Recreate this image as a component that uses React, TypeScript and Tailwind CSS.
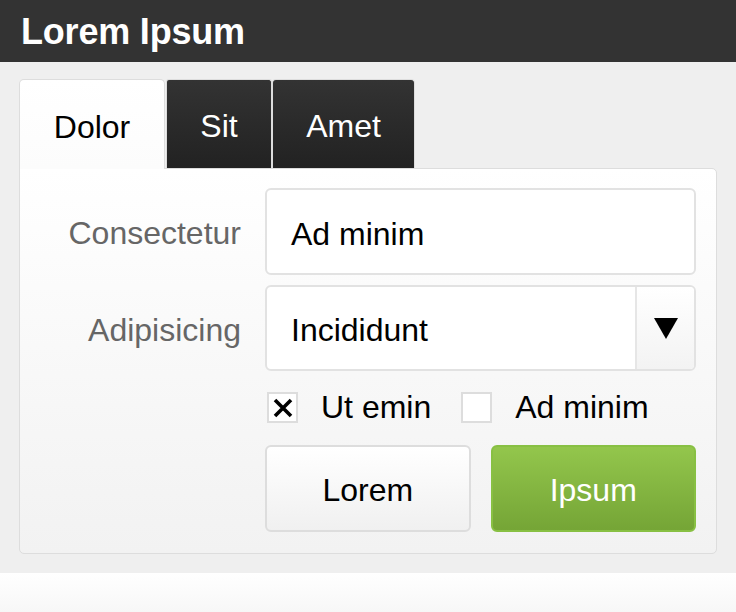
import React from "react";

const font = { fontFamily: '"Liberation Sans", Arial, Helvetica, sans-serif' };

export default function App() {
  return (
    <div className="w-[736px] h-[612px] flex flex-col bg-white" style={font}>
      <div className="h-[62px] bg-[#333333] flex items-center pl-[21px]">
        <span className="text-white font-bold text-[36px] leading-none tracking-[-0.2px] pt-[1px]">Lorem Ipsum</span>
      </div>
      <div className="bg-[#efefef] pt-[17px] pb-[19px] px-[19px] flex flex-col">
        <div className="flex items-end h-[89px]">
          <div className="h-[90px] w-[146px] -mb-px relative z-10 border border-b-0 border-[#dddddd] rounded-t-[5px] bg-gradient-to-b from-white to-[#fcfcfc] flex items-center justify-center text-[32px] text-black pt-[4px]">
            Dolor
          </div>
          <div className="h-[89px] w-[106px] ml-px border border-b-0 border-[#dddddd] rounded-t-[3px] bg-gradient-to-b from-[#333333] to-[#222222] flex items-center justify-center text-[32px] text-white pt-[4px]">
            Sit
          </div>
          <div className="h-[89px] w-[143px] border border-b-0 border-[#dddddd] rounded-t-[4px] bg-gradient-to-b from-[#333333] to-[#222222] flex items-center justify-center text-[32px] text-white pt-[4px]">
            Amet
          </div>
        </div>
        <div className="border-[1.5px] border-[#dddddd] rounded-b-[5px] rounded-tr-[5px] bg-gradient-to-b from-white to-[#f2f2f2] pt-[19px] pb-[21px] pl-[20px] pr-[20px] flex flex-col">
          <div className="flex items-center">
            <div className="w-[201px] text-right text-[32px] text-[#666666] pt-[3px]">Consectetur</div>
            <div className="ml-[24px] flex-1 h-[87px] bg-white border-2 border-[#e2e2e2] rounded-[6px] flex items-center pl-[24px] pt-[4px] text-[32px] text-black">
              Ad minim
            </div>
          </div>
          <div className="flex items-center mt-[10px]">
            <div className="w-[201px] text-right text-[32px] text-[#666666] pt-[3px]">Adipisicing</div>
            <div className="ml-[24px] flex-1 h-[86px] bg-white border-2 border-[#e2e2e2] rounded-[6px] flex items-stretch text-[32px] text-black overflow-hidden">
              <div className="flex-1 flex items-center pl-[24px] pt-[4px]">Incididunt</div>
              <div className="w-[59px] border-l-2 border-[#e6e6e6] bg-gradient-to-b from-white to-[#f3f3f3] flex items-center justify-center">
                <svg width="24" height="21" viewBox="0 0 24 21">
                  <polygon points="0,0 24,0 12,21" fill="#000" />
                </svg>
              </div>
            </div>
          </div>
          <div className="flex items-center ml-[227px] mt-[20px] h-[32px]">
            <div className="w-[31px] h-[31px] bg-white border-2 border-[#dddddd] flex items-center justify-center pt-[2px]">
              <svg width="20" height="20" viewBox="0 0 20 20">
                <path d="M2 2 L18 18 M18 2 L2 18" stroke="#000" strokeWidth="3.6" strokeLinecap="butt" />
              </svg>
            </div>
            <span className="ml-[23px] text-[32px] text-black leading-none">Ut emin</span>
            <div className="ml-[30px] w-[31px] h-[31px] bg-white border-2 border-[#dddddd]" />
            <span className="ml-[23px] text-[32px] text-black leading-none">Ad minim</span>
          </div>
          <div className="ml-[225px] mt-[22px] grid grid-cols-2 gap-[20px]">
            <button className="h-[87px] border-2 border-[#dddddd] rounded-[6px] bg-gradient-to-b from-white to-[#f0f0f0] text-[32px] text-black pt-[3px]">
              Lorem
            </button>
            <button className="h-[87px] border-2 border-[#88c043] rounded-[6px] bg-gradient-to-b from-[#93c64c] to-[#75a536] text-[32px] text-white pt-[3px]">
              Ipsum
            </button>
          </div>
        </div>
      </div>
      <div className="flex-1 bg-gradient-to-b from-white to-[#f7f7f7]" />
    </div>
  );
}
